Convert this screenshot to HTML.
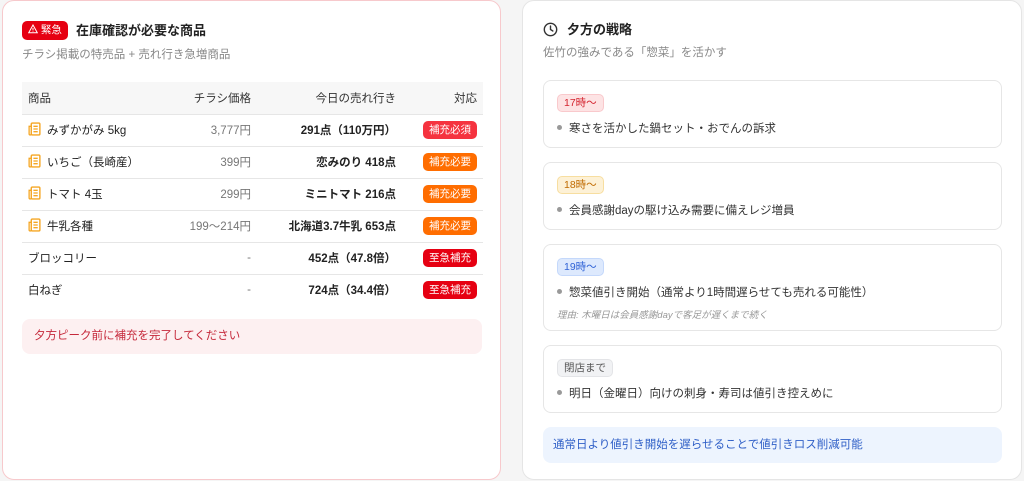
<!DOCTYPE html>
<html><head><meta charset="utf-8"><style>
*{box-sizing:border-box;margin:0;padding:0}
html{width:1024px;height:481px;overflow:hidden}
body{width:1024px;height:481px;background:#f5f5f5;font-family:"Liberation Sans","Noto Sans CJK JP",sans-serif;position:relative;overflow:hidden;color:#222}
.card{position:absolute;top:0;height:480px;background:#fff;border-radius:12px}
.l{left:2px;width:499px;border:1px solid #f7c9cc}
.r{left:522px;width:500px;border:1px solid #e5e5e5}
.abs{position:absolute}
table{position:absolute;left:19px;top:81px;width:461px;border-collapse:collapse;font-size:11.5px;table-layout:fixed}
th{background:#f7f7f7;height:32px;font-weight:normal;color:#333;border-bottom:1px solid #e6e6e6}
td{height:32px;border-bottom:1px solid #e6e6e6}
tr:last-child td{border-bottom:none}
th:first-child,td:first-child{text-align:left;padding-left:6px}
.p{text-align:right;color:#777}
.s{text-align:right;font-weight:bold}
.a{text-align:right;padding-right:6px}
.tb{display:inline-block;height:18px;line-height:18px;padding:0 6px;font-size:10.5px;border-radius:5px;color:#fff}
.ic{display:inline-block;vertical-align:-2px;margin-right:6px}
.blk{position:absolute;left:20px;width:459px;border:1px solid #e6e6e6;border-radius:8px}
.tag{position:absolute;left:13px;top:13px;height:18px;line-height:17px;padding:0 6px;font-size:10.5px;border-radius:5px}
.li{position:absolute;left:13px;font-size:11.5px;color:#333}
.li:before{content:"";display:inline-block;width:5px;height:5px;border-radius:50%;background:#999;margin-right:7px;vertical-align:2px}
</style></head><body>
<div class="card l">
 <div class="abs" style="left:19px;top:20px;height:19px;line-height:19px;padding:0 6px;background:#e60012;color:#fff;font-size:10.5px;border-radius:5px">
  <svg width="10" height="10" viewBox="0 0 10 10" style="vertical-align:-1px"><path d="M5 1L9.3 8.8H0.7Z" fill="none" stroke="#fff" stroke-width="1"/><path d="M5 4v2.4M5 7.4v.5" stroke="#fff" stroke-width="1"/></svg> 緊急</div>
 <div class="abs" style="left:73px;top:20px;font-size:13px;font-weight:bold;line-height:19px">在庫確認が必要な商品</div>
 <div class="abs" style="left:19px;top:45px;font-size:11.5px;color:#888">チラシ掲載の特売品 + 売れ行き急増商品</div>
 <table>
  <colgroup><col style="width:140px"><col style="width:89px"><col style="width:145px"><col></colgroup>
  <tr><th>商品</th><th class="p" style="color:#333">チラシ価格</th><th class="s" style="font-weight:normal">今日の売れ行き</th><th class="a">対応</th></tr>
  <tr><td><svg class="ic" width="13" height="14" viewBox="0 0 12 13"><rect x="3" y="1" width="8" height="11" rx="1" fill="none" stroke="#f5a623" stroke-width="1.3"/><path d="M3 4H1v7a1 1 0 0 0 2 0M5 4h4M5 6.5h4M5 9h4" fill="none" stroke="#f5a623" stroke-width="1.2"/></svg>みずかがみ 5kg</td><td class="p">3,777円</td><td class="s">291点（110万円）</td><td class="a"><span class="tb" style="background:#f5333f">補充必須</span></td></tr>
  <tr><td><svg class="ic" width="13" height="14" viewBox="0 0 12 13"><rect x="3" y="1" width="8" height="11" rx="1" fill="none" stroke="#f5a623" stroke-width="1.3"/><path d="M3 4H1v7a1 1 0 0 0 2 0M5 4h4M5 6.5h4M5 9h4" fill="none" stroke="#f5a623" stroke-width="1.2"/></svg>いちご（長崎産）</td><td class="p">399円</td><td class="s">恋みのり 418点</td><td class="a"><span class="tb" style="background:#ff6d00">補充必要</span></td></tr>
  <tr><td><svg class="ic" width="13" height="14" viewBox="0 0 12 13"><rect x="3" y="1" width="8" height="11" rx="1" fill="none" stroke="#f5a623" stroke-width="1.3"/><path d="M3 4H1v7a1 1 0 0 0 2 0M5 4h4M5 6.5h4M5 9h4" fill="none" stroke="#f5a623" stroke-width="1.2"/></svg>トマト 4玉</td><td class="p">299円</td><td class="s">ミニトマト 216点</td><td class="a"><span class="tb" style="background:#ff6d00">補充必要</span></td></tr>
  <tr><td><svg class="ic" width="13" height="14" viewBox="0 0 12 13"><rect x="3" y="1" width="8" height="11" rx="1" fill="none" stroke="#f5a623" stroke-width="1.3"/><path d="M3 4H1v7a1 1 0 0 0 2 0M5 4h4M5 6.5h4M5 9h4" fill="none" stroke="#f5a623" stroke-width="1.2"/></svg>牛乳各種</td><td class="p">199〜214円</td><td class="s">北海道3.7牛乳 653点</td><td class="a"><span class="tb" style="background:#ff6d00">補充必要</span></td></tr>
  <tr><td>ブロッコリー</td><td class="p">-</td><td class="s">452点（47.8倍）</td><td class="a"><span class="tb" style="background:#e60012">至急補充</span></td></tr>
  <tr><td>白ねぎ</td><td class="p">-</td><td class="s">724点（34.4倍）</td><td class="a"><span class="tb" style="background:#e60012">至急補充</span></td></tr>
 </table>
 <div class="abs" style="left:19px;top:318px;width:460px;height:35px;background:#fdf0f1;border-radius:8px;color:#c5283a;font-size:11.5px;line-height:35px;padding-left:12px">夕方ピーク前に補充を完了してください</div>
</div>
<div class="card r">
 <svg class="abs" style="left:20px;top:21px" width="15" height="15" viewBox="0 0 16 16"><circle cx="8" cy="8" r="6.6" fill="none" stroke="#333" stroke-width="1.5"/><path d="M8 4.3V8l2.5 1.6" fill="none" stroke="#333" stroke-width="1.5" stroke-linecap="round"/></svg>
 <div class="abs" style="left:44px;top:19px;font-size:13px;font-weight:bold;line-height:19px">夕方の戦略</div>
 <div class="abs" style="left:20px;top:43px;font-size:11.5px;color:#888">佐竹の強みである「惣菜」を活かす</div>
 <div class="blk" style="top:79px;height:68px"><div class="tag" style="background:#fde3e4;color:#d4242f;border:1px solid #f9c9cc">17時〜</div><div class="li" style="top:39px">寒さを活かした鍋セット・おでんの訴求</div></div>
 <div class="blk" style="top:161px;height:68px"><div class="tag" style="background:#fdf1d6;color:#c06a00;border:1px solid #f7dea0">18時〜</div><div class="li" style="top:39px">会員感謝dayの駆け込み需要に備えレジ増員</div></div>
 <div class="blk" style="top:243px;height:87px"><div class="tag" style="background:#dde9fd;color:#2f62d6;border:1px solid #c4d8fb">19時〜</div><div class="li" style="top:39px">惣菜値引き開始（通常より1時間遅らせても売れる可能性）</div><div class="abs" style="left:13px;top:62px;font-size:9.5px;color:#999;font-style:italic">理由: 木曜日は会員感謝dayで客足が遅くまで続く</div></div>
 <div class="blk" style="top:344px;height:68px"><div class="tag" style="background:#f1f2f4;color:#555;border:1px solid #e3e4e7">閉店まで</div><div class="li" style="top:39px">明日（金曜日）向けの刺身・寿司は値引き控えめに</div></div>
 <div class="abs" style="left:20px;top:426px;width:459px;height:36px;background:#edf4fe;border-radius:8px;color:#2f5fc7;font-size:11.5px;line-height:36px;padding-left:10px">通常日より値引き開始を遅らせることで値引きロス削減可能</div>
</div>
</body></html>
